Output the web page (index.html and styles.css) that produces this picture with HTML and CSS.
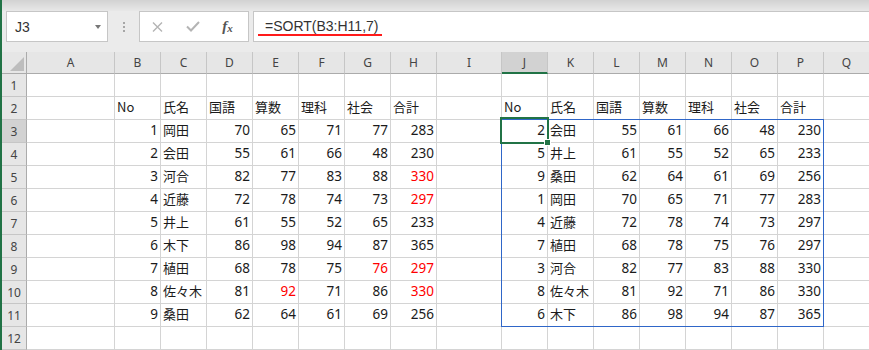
FILE: index.html
```html
<!DOCTYPE html>
<html lang="ja">
<head>
  <meta charset="UTF-8">
  <title>SORT関数</title>
  <link rel="stylesheet" href="styles.css">
</head>
<body>
  <div class="Window">
    <div class="RibbonEdge"></div>

    <div class="FormulaBar">
      <div class="NameBox">
        <span>J3</span>
        <span class="Caret"></span>
      </div>
      <div class="Grip"><i></i><i></i><i></i></div>
      <div class="FormulaButtons">
        <span class="FxButton">
          <svg width="11" height="10" viewBox="0 0 11 10"><path d="M1 0.5 L10 9.5 M10 0.5 L1 9.5" stroke="#b4b4b4" stroke-width="1.4" fill="none"/></svg>
        </span>
        <span class="FxButton">
          <svg width="14" height="11" viewBox="0 0 14 11"><path d="M1 5.5 L5 9.5 L13 1" stroke="#b4b4b4" stroke-width="2" fill="none"/></svg>
        </span>
        <span class="FxButton FxLabel"><i>f</i><i class="FxX">x</i></span>
      </div>
      <div class="FormulaInput">
        <span class="Formula">=SORT(B3:H11,7)</span>
      </div>
    </div>

    <div class="Sheet">
      <div class="Corner"></div><div class="ColHead">A</div><div class="ColHead">B</div><div class="ColHead">C</div><div class="ColHead">D</div><div class="ColHead">E</div><div class="ColHead">F</div><div class="ColHead">G</div><div class="ColHead">H</div><div class="ColHead">I</div><div class="ColHead Selected">J</div><div class="ColHead">K</div><div class="ColHead">L</div><div class="ColHead">M</div><div class="ColHead">N</div><div class="ColHead">O</div><div class="ColHead">P</div><div class="ColHead">Q</div>

      <div class="RowHead">1</div><div class="Cell"></div><div class="Cell"></div><div class="Cell"></div><div class="Cell"></div><div class="Cell"></div><div class="Cell"></div><div class="Cell"></div><div class="Cell"></div><div class="Cell"></div><div class="Cell"></div><div class="Cell"></div><div class="Cell"></div><div class="Cell"></div><div class="Cell"></div><div class="Cell"></div><div class="Cell"></div><div class="Cell"></div>

      <div class="RowHead">2</div><div class="Cell"></div><div class="Cell Text">No</div><div class="Cell Text">氏名</div><div class="Cell Text">国語</div><div class="Cell Text">算数</div><div class="Cell Text">理科</div><div class="Cell Text">社会</div><div class="Cell Text">合計</div><div class="Cell"></div><div class="Cell Text">No</div><div class="Cell Text">氏名</div><div class="Cell Text">国語</div><div class="Cell Text">算数</div><div class="Cell Text">理科</div><div class="Cell Text">社会</div><div class="Cell Text">合計</div><div class="Cell"></div>

      <div class="RowHead Selected">3</div><div class="Cell"></div><div class="Cell Num">1</div><div class="Cell Text">岡田</div><div class="Cell Num">70</div><div class="Cell Num">65</div><div class="Cell Num">71</div><div class="Cell Num">77</div><div class="Cell Num">283</div><div class="Cell"></div><div class="Cell Num">2</div><div class="Cell Text">会田</div><div class="Cell Num">55</div><div class="Cell Num">61</div><div class="Cell Num">66</div><div class="Cell Num">48</div><div class="Cell Num">230</div><div class="Cell"></div>

      <div class="RowHead">4</div><div class="Cell"></div><div class="Cell Num">2</div><div class="Cell Text">会田</div><div class="Cell Num">55</div><div class="Cell Num">61</div><div class="Cell Num">66</div><div class="Cell Num">48</div><div class="Cell Num">230</div><div class="Cell"></div><div class="Cell Num">5</div><div class="Cell Text">井上</div><div class="Cell Num">61</div><div class="Cell Num">55</div><div class="Cell Num">52</div><div class="Cell Num">65</div><div class="Cell Num">233</div><div class="Cell"></div>

      <div class="RowHead">5</div><div class="Cell"></div><div class="Cell Num">3</div><div class="Cell Text">河合</div><div class="Cell Num">82</div><div class="Cell Num">77</div><div class="Cell Num">83</div><div class="Cell Num">88</div><div class="Cell Num Red">330</div><div class="Cell"></div><div class="Cell Num">9</div><div class="Cell Text">桑田</div><div class="Cell Num">62</div><div class="Cell Num">64</div><div class="Cell Num">61</div><div class="Cell Num">69</div><div class="Cell Num">256</div><div class="Cell"></div>

      <div class="RowHead">6</div><div class="Cell"></div><div class="Cell Num">4</div><div class="Cell Text">近藤</div><div class="Cell Num">72</div><div class="Cell Num">78</div><div class="Cell Num">74</div><div class="Cell Num">73</div><div class="Cell Num Red">297</div><div class="Cell"></div><div class="Cell Num">1</div><div class="Cell Text">岡田</div><div class="Cell Num">70</div><div class="Cell Num">65</div><div class="Cell Num">71</div><div class="Cell Num">77</div><div class="Cell Num">283</div><div class="Cell"></div>

      <div class="RowHead">7</div><div class="Cell"></div><div class="Cell Num">5</div><div class="Cell Text">井上</div><div class="Cell Num">61</div><div class="Cell Num">55</div><div class="Cell Num">52</div><div class="Cell Num">65</div><div class="Cell Num">233</div><div class="Cell"></div><div class="Cell Num">4</div><div class="Cell Text">近藤</div><div class="Cell Num">72</div><div class="Cell Num">78</div><div class="Cell Num">74</div><div class="Cell Num">73</div><div class="Cell Num">297</div><div class="Cell"></div>

      <div class="RowHead">8</div><div class="Cell"></div><div class="Cell Num">6</div><div class="Cell Text">木下</div><div class="Cell Num">86</div><div class="Cell Num">98</div><div class="Cell Num">94</div><div class="Cell Num">87</div><div class="Cell Num">365</div><div class="Cell"></div><div class="Cell Num">7</div><div class="Cell Text">植田</div><div class="Cell Num">68</div><div class="Cell Num">78</div><div class="Cell Num">75</div><div class="Cell Num">76</div><div class="Cell Num">297</div><div class="Cell"></div>

      <div class="RowHead">9</div><div class="Cell"></div><div class="Cell Num">7</div><div class="Cell Text">植田</div><div class="Cell Num">68</div><div class="Cell Num">78</div><div class="Cell Num">75</div><div class="Cell Num Red">76</div><div class="Cell Num Red">297</div><div class="Cell"></div><div class="Cell Num">3</div><div class="Cell Text">河合</div><div class="Cell Num">82</div><div class="Cell Num">77</div><div class="Cell Num">83</div><div class="Cell Num">88</div><div class="Cell Num">330</div><div class="Cell"></div>

      <div class="RowHead">10</div><div class="Cell"></div><div class="Cell Num">8</div><div class="Cell Text">佐々木</div><div class="Cell Num">81</div><div class="Cell Num Red">92</div><div class="Cell Num">71</div><div class="Cell Num">86</div><div class="Cell Num Red">330</div><div class="Cell"></div><div class="Cell Num">8</div><div class="Cell Text">佐々木</div><div class="Cell Num">81</div><div class="Cell Num">92</div><div class="Cell Num">71</div><div class="Cell Num">86</div><div class="Cell Num">330</div><div class="Cell"></div>

      <div class="RowHead">11</div><div class="Cell"></div><div class="Cell Num">9</div><div class="Cell Text">桑田</div><div class="Cell Num">62</div><div class="Cell Num">64</div><div class="Cell Num">61</div><div class="Cell Num">69</div><div class="Cell Num">256</div><div class="Cell"></div><div class="Cell Num">6</div><div class="Cell Text">木下</div><div class="Cell Num">86</div><div class="Cell Num">98</div><div class="Cell Num">94</div><div class="Cell Num">87</div><div class="Cell Num">365</div><div class="Cell"></div>

      <div class="RowHead">12</div><div class="Cell"></div><div class="Cell"></div><div class="Cell"></div><div class="Cell"></div><div class="Cell"></div><div class="Cell"></div><div class="Cell"></div><div class="Cell"></div><div class="Cell"></div><div class="Cell"></div><div class="Cell"></div><div class="Cell"></div><div class="Cell"></div><div class="Cell"></div><div class="Cell"></div><div class="Cell"></div><div class="Cell"></div>

      <!-- overlays: spill range + active cell -->
      <div class="SpillRange"></div>
      <div class="ActiveCell"><span class="FillHandle"></span></div>
    </div>
  </div>
</body>
</html>
```

FILE: styles.css
```css
* {
  margin: 0;
  padding: 0;
  box-sizing: border-box;
}

body {
  width: 869px;
  height: 350px;
  overflow: hidden;
  background: #ebebeb;
  font-family: "Noto Sans CJK JP", sans-serif;
  color: #1b1b1b;
}

.Window {
  border-left: 2px solid #217346;
  height: 350px;
}

.RibbonEdge {
  height: 11px;
  background: linear-gradient(#d2d2d2, #e8e8e8);
}

/* Formula bar */
.FormulaBar {
  display: flex;
  height: 31px;
  padding-left: 4px;
  margin-bottom: 10px;
}

.NameBox {
  width: 102px;
  background: #fff;
  border: 1px solid #c6c6c6;
  display: flex;
  align-items: center;
  justify-content: space-between;
  padding: 0 6px 0 8px;
  font: 14px "Liberation Sans", sans-serif;
  color: #333;
}

.Caret {
  width: 0;
  height: 0;
  border-left: 3px solid transparent;
  border-right: 3px solid transparent;
  border-top: 4px solid #777;
}

.Grip {
  width: 31px;
  display: flex;
  flex-direction: column;
  align-items: center;
  justify-content: center;
  gap: 2px;
}

.Grip i {
  width: 2px;
  height: 2px;
  background: #a6a6a6;
}

.FormulaButtons {
  width: 110px;
  background: #fff;
  border: 1px solid #c6c6c6;
  display: flex;
  align-items: center;
}

.FxButton {
  width: 35px;
  display: flex;
  justify-content: center;
  align-items: center;
}

.FxLabel {
  font-family: "Liberation Serif", serif;
  color: #555;
  font-size: 15px;
  font-weight: bold;
}

.FxX {
  font-size: 11px;
  margin-top: 3px;
}

.FormulaInput {
  flex: 1;
  margin-left: 4px;
  background: #fff;
  border: 1px solid #c6c6c6;
  border-right: none;
  padding-left: 4px;
}

.Formula {
  display: inline-block;
  margin-top: 7px;
  padding: 0 4px 0 7px;
  font: 14px/15px "Liberation Sans", sans-serif;
  color: #333;
  border-bottom: 2px solid #ff1a1a;
}

/* Worksheet grid */
.Sheet {
  position: relative;
  display: grid;
  grid-template-columns: 25px 88px repeat(7, 46px) 65px repeat(7, 46px) 46px;
  grid-template-rows: 22px repeat(12, 23px);
}

.Corner,
.ColHead,
.RowHead {
  background: #e6e6e6;
  color: #444;
  font: 12px "Noto Sans", sans-serif;
  display: flex;
  align-items: center;
  justify-content: center;
}

.Corner {
  border-right: 1px solid #ababab;
  border-bottom: 1px solid #ababab;
  align-items: flex-end;
  justify-content: flex-end;
  padding: 0 2px 2px 0;
}

.Corner::after {
  content: '';
  width: 0;
  height: 0;
  border-left: 14px solid transparent;
  border-bottom: 14px solid #bdbdbd;
}

.ColHead {
  border-right: 1px solid #c6c6c6;
  border-bottom: 1px solid #ababab;
}

.RowHead {
  border-right: 1px solid #ababab;
  border-bottom: 1px solid #c6c6c6;
}

.ColHead.Selected {
  background: #d2d2d2;
  border-bottom: 2px solid #217346;
}

.RowHead.Selected {
  background: #d2d2d2;
}

.Cell {
  background: #fff;
  border-right: 1px solid #d4d4d4;
  border-bottom: 1px solid #d4d4d4;
  display: flex;
  align-items: center;
  padding: 0 2px;
  white-space: nowrap;
}

.Text {
  font-family: "Noto Sans CJK JP", sans-serif;
  font-size: 13px;
  padding-bottom: 3px;
}

.Num {
  justify-content: flex-end;
  font-family: "Noto Sans", sans-serif;
  font-size: 13.5px;
  padding-bottom: 2px;
}

.Red {
  color: #ff0000;
}

.SpillRange {
  position: absolute;
  left: 499px;
  top: 67px;
  width: 323px;
  height: 208px;
  border: 1px solid #2f66c8;
}

.ActiveCell {
  position: absolute;
  left: 498px;
  top: 65px;
  width: 49px;
  height: 27px;
  border: 2px solid #217346;
}

.FillHandle {
  position: absolute;
  right: -4px;
  bottom: -4px;
  width: 7px;
  height: 7px;
  background: #217346;
  border: 1px solid #fff;
}
```
